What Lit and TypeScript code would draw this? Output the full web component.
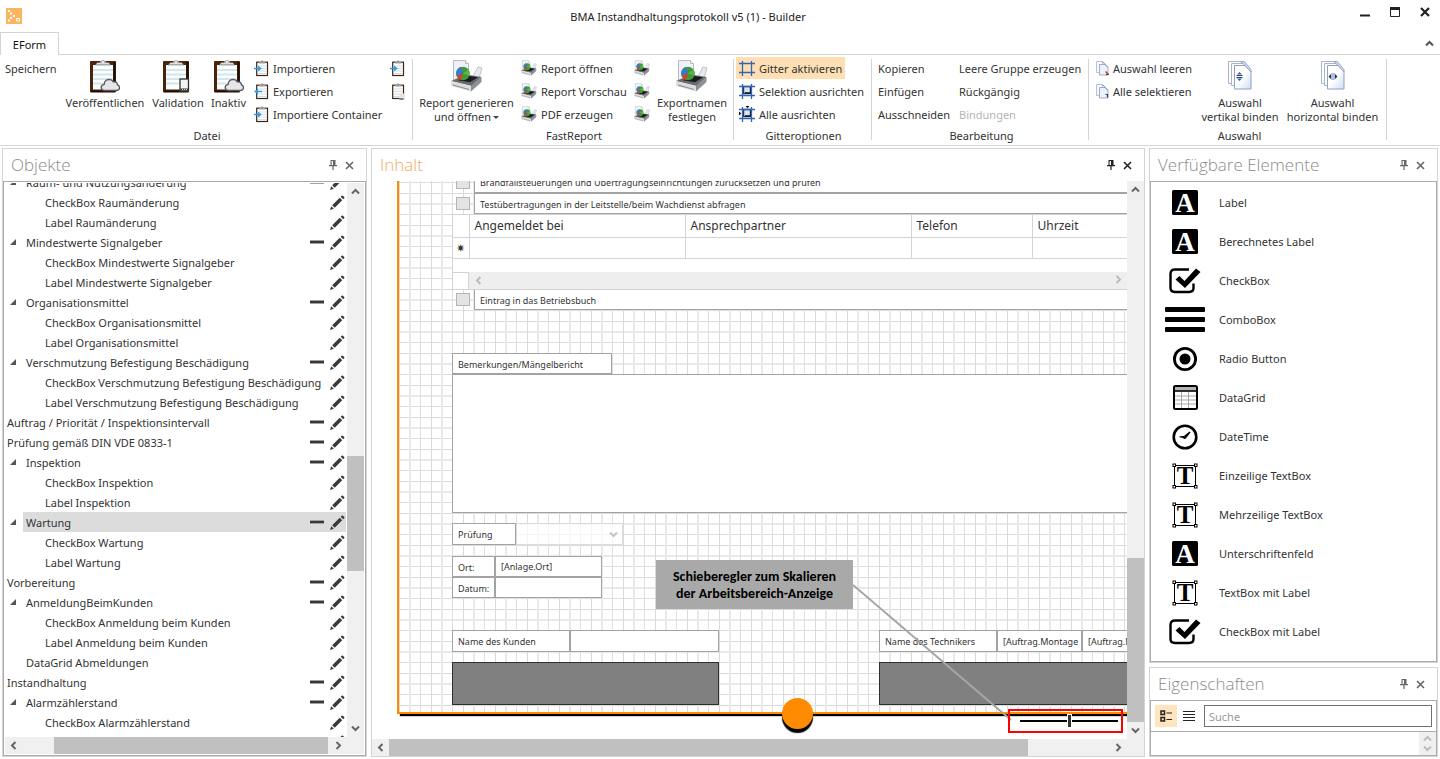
import { LitElement, html, svg, css, nothing } from "lit";
import { customElement, property } from "lit/decorators.js";
import { classMap } from "lit/directives/class-map.js";
import { styleMap } from "lit/directives/style-map.js";

/* ---------- glyphs ---------- */

const pinGlyph = html`<svg width="8" height="10" viewBox="0 0 8 10" aria-hidden="true">
  <path d="M1.500 0h5v5h1.500v1.200h-3.400v3.800h-1.200v-3.800h-3.400v-1.200h1.500z" fill="currentColor"/>
  <path d="M2.600 1h1.400v4h-1.400z" fill="#fff"/></svg>`;
const closeGlyph = html`<svg width="9" height="9" viewBox="0 0 9 9" aria-hidden="true">
  <path d="M1 1l7 7M8 1l-7 7" stroke="currentColor" stroke-width="1.600" fill="none"/></svg>`;
const chevrons: Record<string, string> = {
  up: "M1 6.500l3.500-3.500 3.500 3.500",
  down: "M1 2.500l3.500 3.500 3.500-3.500",
  left: "M6.500 1l-3.500 3.500 3.500 3.500",
  right: "M2.500 1l3.500 3.500-3.500 3.500",
};
const chevron = (dir: string) => html`<svg width="9" height="9" viewBox="0 0 9 9" aria-hidden="true">
  <path d=${chevrons[dir]} stroke="currentColor" stroke-width="2" fill="none"/></svg>`;
const pencilGlyph = html`<svg width="15" height="15" viewBox="0 0 15 15" aria-hidden="true">
  <path d="M0 15l1.300-3.800 2.500 2.500zM2.200 10.300l7.500-7.500 2.500 2.500-7.500 7.500zM10.700 1.800l1-1q.6-.6 1.200 0l1.300 1.300q.6.600 0 1.200l-1 1z" fill="#353a3b"/></svg>`;
const minusGlyph = html`<svg width="14" height="4" viewBox="0 0 14 4" aria-hidden="true">
  <path d="M0 0h14v4h-14z" fill="#b9bcbc"/><path d="M0 .8h14v2.400h-14z" fill="#353a3b"/></svg>`;
const expandGlyph = html`<svg width="6" height="6" viewBox="0 0 6 6" aria-hidden="true"><path d="M6 0v6h-6z" fill="#555"/></svg>`;

const cloudPath = "M14.500 30.500q-3.300-.2-3.300-3 0-2.800 3-3.200.3-4.600 4.600-5 3.200 0 4.500 2.600 3.800-.6 4.200 3 2 .6 2 2.800 0 2.600-2.800 2.800z";
const clipboardBig = (badge: "cloud" | "phone") => html`<svg width="30" height="33" viewBox="0 0 30 33" aria-hidden="true">
  <rect x="0" y="1" width="26" height="31" rx="1" fill="#4a2509"/>
  <path d="M24.500 2v29.500h-24" stroke="#1e0d03" stroke-width="2" fill="none"/>
  <rect x="3" y="5" width="20" height="24.500" fill="#fdfefe"/>
  <path d="M3 10h20M3 14.500h20M3 19h20M3 23.500h20" stroke="#d3e6ee" stroke-width="2"/>
  <path d="M5 5.500l2-3h2.500q1-2.500 3.500-2.500t3.500 2.500h2.500l2 3z" fill="#a7a9ab"/>
  <path d="M7 3.500h12" stroke="#dcdedf" stroke-width="1"/><circle cx="13" cy="2" r="1" fill="#fff"/>
  ${badge === "cloud"
    ? svg`<path d=${cloudPath} fill="#e6e6ea" stroke="#58585c" stroke-width="1.300"/>`
    : svg`<rect x="17" y="19" width="8.500" height="12" fill="#f4f4f4" stroke="#333" stroke-width="1.300"/><path d="M17.500 28.500h7.500v2h-7.500z" fill="#333"/><path d="M19 29.500h1M21 29.500h1M23 29.500h1" stroke="#ddd"/>`}
</svg>`;
const clipboardSmall = (kind: "in" | "out" | "phone") => html`<svg width="15" height="17" viewBox="0 0 15 17" aria-hidden="true">
  <rect x="2.700" y="2.200" width="10.800" height="13.300" fill="#fff" stroke="#3d2410" stroke-width="1.200"/>
  <path d="M4 6h8.500M4 8.500h8.500M4 11h8.500M4 13.500h8.500" stroke="#cfe0ea" stroke-width="1"/>
  <path d="M5 3.500v-1.500h1.800l.6-1.500h1.500l.6 1.500h1.800v1.500z" fill="#9b9b9b"/>
  ${kind === "in" ? svg`<path d="M0 7.700h4v-2.200l3.700 3-3.700 3v-2.200h-4z" fill="#2f9be6"/>` : nothing}
  ${kind === "out" ? svg`<path d="M8 7.700h-4v-2.200l-4 3 4 3v-2.200h4z" fill="#2f9be6"/>` : nothing}
  ${kind === "phone" ? svg`<path d="M9.500 10.500h5v6.500h-5z" fill="#e4e4e4"/><path d="M9.500 16h4" stroke="#222"/>` : nothing}
</svg>`;
const reportGlyph = (size: number) => html`<svg width=${size} height=${size} viewBox="0 0 32 32" aria-hidden="true">
  <path d="M2.500 .5h12l3 3v18h-15z" fill="#eef2f7" stroke="#b5bcc6"/>
  <path d="M14.500 .5v3h3" fill="#fff" stroke="#b5bcc6"/>
  <path d="M27 7l4 1-3.500 12-7-1z" fill="#e7e9ee" stroke="#a9adb4" stroke-width=".7"/>
  <path d="M0 21l15-6.500 15.500 2.500-10 9z" fill="#6b6c70"/>
  <path d="M14 15.500l13 1.800-8 5-12-2z" fill="#1b1b1e"/>
  <path d="M0 21l20 5v5.500l-20-5.500z" fill="#dcdddf"/>
  <path d="M20 26l10.500-9v5l-10.500 9.500z" fill="#8c8f94"/>
  <path d="M2 25l16 4.500" stroke="#8a8c90" stroke-width="1"/>
  <circle cx="12" cy="13.500" r="6.800" fill="#3f9a37"/>
  <path d="M12 13.500l-6.500 2.500a6.800 6.800 0 0 1 4.500-9.200z" fill="#3c78c8"/>
  <path d="M12 13.500l-6.500 2.500a6.800 6.800 0 0 0 4.500 4z" fill="#d8402b"/>
  <path d="M12 13.500l5.600-3.900a6.800 6.800 0 0 1 .8 6.200z" fill="#58b948"/>
</svg>`;
const gridGlyph = (kind: number) => html`<svg width="16" height="16" viewBox="0 0 16 16" aria-hidden="true">
  ${kind > 0 ? svg`<rect x="4.500" y="3.500" width="7" height="7" fill="#dfe3ee" stroke="#2a2f45" stroke-width="1.400"/><path d="M6 10h6v-6" stroke="#12162a" stroke-width="1.500" fill="none"/>` : nothing}
  ${kind > 1 ? svg`<path d="M6.500 0h4l-2 2.300zM0 5.500v4l2.300-2z" fill="#111"/>` : nothing}
  <path d="M0 3.500h16M0 12.500h16M3.500 1v15M12.500 1v15" stroke="#2f66b5" stroke-width="1.300" fill="none"/>
</svg>`;
const pagesGlyph = (kind: "v" | "h") => html`<svg width="24" height="30" viewBox="0 0 24 30" aria-hidden="true">
  <defs><linearGradient id="pg" x1="0" y1="0" x2="1" y2="1"><stop offset="0" stop-color="#fff"/><stop offset=".5" stop-color="#fff"/><stop offset="1" stop-color="#cddcf5"/></linearGradient></defs>
  <path d="M.5 1.500h12l4 4v18h-16z" fill="url(#pg)" stroke="#a9b5cf"/>
  <path d="M3.500 3.500h12l4 4v18h-16z" fill="url(#pg)" stroke="#a9b5cf"/>
  <path d="M6.500 5.500h10.500l6 6v17.500h-16.500z" fill="url(#pg)" stroke="#8ea0c6"/>
  <path d="M12.500 1.500h4l6.500 8v2.500l-6-6.500z" fill="#cfd8e8" stroke="#8593b3" stroke-width=".7"/>
  ${kind === "v"
    ? svg`<path d="M8.500 15.500h6M8.500 17.500h6" stroke="#28426e"/><path d="M11.500 12l2.500 2.500h-5zM11.500 21l2.500-2.500h-5z" fill="#3f63a0"/>`
    : svg`<path d="M11 13v7M13 13v7" stroke="#5f7fb5"/><path d="M7.500 16.500l2.500-2.500v5zM16.500 16.500l-2.500-2.500v5z" fill="#1e2c46"/>`}
</svg>`;
const pagesSmall = (clear: boolean) => html`<svg width="13" height="15" viewBox="0 0 13 15" aria-hidden="true">
  <path d="M.5 .5h6v11h-6z" fill="#f6f9fe" stroke="#b7c2da"/>
  <path d="M3.500 3.500h5.500l3 3v7.500h-8.500z" fill="#edf2fb" stroke="#9fadc9"/>
  <path d="M6.500 .5l5.500 6" stroke="#8292b5"/>
  ${clear ? svg`<path d="M9.500 10.500l3 3" stroke="#c33c22" stroke-width="1.400"/><path d="M10 13.500h2.500" stroke="#333"/>` : svg`<path d="M9.500 10.500h2v3" stroke="#2d4068" stroke-width="1.200" fill="none"/>`}
</svg>`;

const toolGlyphs: Record<string, unknown> = {
  label: html`<svg width="26" height="25" viewBox="0 0 26 25" aria-hidden="true"><rect width="26" height="25" rx="1.500"/>
    <text x="13" y="22" text-anchor="middle" class="glyph-a">A</text></svg>`,
  check: html`<svg width="32" height="26" viewBox="0 0 32 26" aria-hidden="true">
    <path d="M20 1.500h-14q-4.500 0-4.500 4.500v14q0 4 4.500 4h14q4.500 0 4.500-4v-4.500" fill="none" stroke="#000" stroke-width="2.400"/>
    <path d="M6.500 11.500l4-3.500 5 5 11.500-12.500 4.500 3.500-15.500 16z"/></svg>`,
  combo: html`<svg width="40" height="25" viewBox="0 0 40 25" aria-hidden="true"><rect width="40" height="5" rx="1"/><rect y="10" width="40" height="5" rx="1"/><rect y="20" width="40" height="5" rx="1"/></svg>`,
  radio: html`<svg width="26" height="26" viewBox="0 0 26 26" aria-hidden="true"><circle cx="13" cy="13" r="10.600" fill="none" stroke="#000" stroke-width="2.800"/><circle cx="13" cy="13" r="5.500"/></svg>`,
  grid: html`<svg width="25" height="25" viewBox="0 0 25 25" aria-hidden="true"><rect x="1" y="1" width="23" height="23" rx="1.500" fill="#fff" stroke="#000" stroke-width="2"/>
    <path d="M2 2h21v3.500h-21z" fill="#b4b4b4"/><path d="M1 6h23" stroke="#000" stroke-width="1.600"/>
    <path d="M2 11h21M2 15h21M2 19h21M8.500 7v16M15.500 7v16" stroke="#a6a6a6" stroke-width="1"/></svg>`,
  clock: html`<svg width="26" height="26" viewBox="0 0 26 26" aria-hidden="true"><circle cx="13" cy="13" r="11.300" fill="none" stroke="#000" stroke-width="2.600"/>
    <path d="M7.500 12.300l4.500-.3 5.500-4.500 1 1-4.500 5.700q-1.500 1.500-3-.2l-3.500-.7z"/></svg>`,
  text: html`<svg width="26" height="26" viewBox="0 0 26 26" aria-hidden="true"><path d="M2.500 2.500h21v21h-21z" fill="none" stroke="#000"/>
    <text x="13" y="21" text-anchor="middle" class="glyph-t">T</text>
    <g fill="#fff" stroke="#000"><rect x="1" y="1" width="2.500" height="2.500"/><rect x="22.500" y="1" width="2.500" height="2.500"/><rect x="1" y="22.500" width="2.500" height="2.500"/><rect x="22.500" y="22.500" width="2.500" height="2.500"/></g></svg>`,
};

/* ---------- shared pieces ---------- */

const base = css`
  * { box-sizing: border-box; }
  button, input, select, textarea { font: inherit; color: inherit; margin: 0; padding: 0; border: 0; background: none; border-radius: 0; outline: none; }
  button { display: inline-flex; align-items: center; justify-content: center; }
  svg { display: block; flex: none; }
`;

@customElement("scroll-bar")
class ScrollBar extends LitElement {
  @property({ type: Boolean, reflect: true }) vertical = false;
  @property({ type: Number }) before = 0;
  @property({ type: Number }) size = 0;
  @property({ type: Number }) after = 0;
  static styles = [base, css`
    :host { display: flex; height: 17px; background: #f0f0f0; color: #666; }
    :host([vertical]) { flex-direction: column; width: 17px; height: auto; }
    .step { flex: none; width: 17px; height: 17px; }
    .thumb { background: #c0c0c0; }
  `];
  render() {
    const grow = (n: number) => styleMap({ flex: `${n} 1 0px` });
    return html`
      <button class="step" aria-label="Zurück">${chevron(this.vertical ? "up" : "left")}</button>
      <span style=${grow(this.before)}></span><span class="thumb" style=${grow(this.size)}></span><span style=${grow(this.after)}></span>
      <button class="step" aria-label="Weiter">${chevron(this.vertical ? "down" : "right")}</button>`;
  }
}

@customElement("dock-panel")
class DockPanel extends LitElement {
  @property() heading = "";
  @property({ type: Boolean, reflect: true }) active = false;
  @property({ type: Boolean, reflect: true }) framed = false;
  static styles = [base, css`
    :host { display: flex; flex-direction: column; min-width: 0; min-height: 0; border: 1px solid #d4d4d4; background: #fff; }
    .head { display: flex; align-items: center; flex: none; height: 32px; padding: 0 8px; color: #666; }
    h2 { flex: 1; margin: 0; font-family: "Open Sans", "Noto Sans", sans-serif; font-size: 17px; line-height: 24px; font-weight: 300; color: #8c8c8c; }
    .head button { width: 17px; height: 16px; }
    .body { flex: 1; display: flex; flex-direction: column; min-height: 0; min-width: 0; }
    :host([framed]) .body { border: 1px solid #ababab; }
    :host([active]) h2 { color: #f2ab62; }
    :host([active]) .head { color: #222; }
  `];
  render() {
    return html`<header class="head"><h2>${this.heading}</h2>
      <button aria-label="Anheften">${pinGlyph}</button><button aria-label="Schließen">${closeGlyph}</button></header>
      <div class="body"><slot></slot></div>`;
  }
}

/* ---------- ribbon ---------- */

@customElement("app-ribbon")
class AppRibbon extends LitElement {
  static styles = [base, css`
    :host { display: flex; height: 91px; padding: 2px 0 3px; border-bottom: 1px solid #d4d4d4; }
    .group { display: flex; flex-direction: column; flex: none; border-right: 1px solid #d4d4d4; margin: 2px 0; }
    .items { flex: 1; display: flex; align-items: flex-start; margin-top: -2px; }
    .caption { height: 14px; line-height: 14px; margin-bottom: -3px; text-align: center; }
    .datei { width: 413px; padding-left: 2px; }
    .report { width: 321px; padding-left: 2px; }
    .gitter { width: 138px; padding-left: 2px; }
    .bearb { width: 217px; padding-left: 3px; }
    .auswahl { width: 298px; padding-left: 4px; }
    .col { display: flex; flex-direction: column; align-items: flex-start; gap: 1px; flex: none; }
    .row { height: 22px; padding: 0 3px; gap: 4px; white-space: nowrap; }
    .row.on { background: #fddfb3; }
    .row:disabled { color: #b5b5b5; }
    .big { flex-direction: column; justify-content: flex-start; padding-top: 3px; flex: none; line-height: 14px; white-space: nowrap; }
    .big .pic { height: 36px; display: flex; align-items: flex-start; }
    .drop { display: inline-block; margin-left: 2px; vertical-align: 2px; border: 3px solid transparent; border-top-color: #444; border-bottom: 0; }
    .c58 { width: 58px; } .c84 { width: 90px; } .c56 { width: 56px; } .c46 { width: 45px; } .c139 { width: 136px; }
    .c104 { width: 103px; } .c113 { width: 113px; } .c24 { width: 22px; } .c78 { width: 78px; } .c81 { width: 81px; }
    .c100 { width: 100px; } .c94 { width: 94px; } .c90 { width: 91px; }
  `];
  row(text: string, icon: unknown = nothing, on = false, off = false) {
    return html`<button class=${classMap({ row: true, on })} ?disabled=${off} aria-label=${text || "Bericht"}>${icon}${text}</button>`;
  }
  big(cls: string, icon: unknown, a: string, b: string = "", drop = false) {
    return html`<button class="big ${cls}"><span class="pic">${icon}</span><span>${a}</span>${b ? html`<span>${b}${drop ? html`<i class="drop"></i>` : nothing}</span>` : nothing}</button>`;
  }
  render() {
    return html`
      <section class="group datei"><div class="items">
        <div class="col c58">${this.row("Speichern")}</div>
        ${this.big("c84", clipboardBig("cloud"), "Veröffentlichen")}
        ${this.big("c56", clipboardBig("phone"), "Validation")}
        ${this.big("c46", clipboardBig("cloud"), "Inaktiv")}
        <div class="col c139">${this.row("Importieren", clipboardSmall("in"))}${this.row("Exportieren", clipboardSmall("out"))}${this.row("Importiere Container", clipboardSmall("in"))}</div>
        <div class="col">${this.row("", clipboardSmall("in"))}${this.row("", clipboardSmall("phone"))}</div>
      </div><div class="caption">Datei</div></section>
      <section class="group report"><div class="items">
        ${this.big("c104", reportGlyph(32), "Report generieren", "und öffnen", true)}
        <div class="col c113">${this.row("Report öffnen", reportGlyph(16))}${this.row("Report Vorschau", reportGlyph(16))}${this.row("PDF erzeugen", reportGlyph(16))}</div>
        <div class="col c24">${this.row("", reportGlyph(16))}${this.row("", reportGlyph(16))}${this.row("", reportGlyph(16))}</div>
        ${this.big("c78", reportGlyph(32), "Exportnamen", "festlegen")}
      </div><div class="caption">FastReport</div></section>
      <section class="group gitter"><div class="items">
        <div class="col">${this.row("Gitter aktivieren", gridGlyph(0), true)}${this.row("Selektion ausrichten", gridGlyph(1))}${this.row("Alle ausrichten", gridGlyph(2))}</div>
      </div><div class="caption">Gitteroptionen</div></section>
      <section class="group bearb"><div class="items">
        <div class="col c81">${this.row("Kopieren")}${this.row("Einfügen")}${this.row("Ausschneiden")}</div>
        <div class="col">${this.row("Leere Gruppe erzeugen")}${this.row("Rückgängig")}${this.row("Bindungen", nothing, false, true)}</div>
      </div><div class="caption">Bearbeitung</div></section>
      <section class="group auswahl"><div class="items">
        <div class="col c100">${this.row("Auswahl leeren", pagesSmall(true))}${this.row("Alle selektieren", pagesSmall(false))}</div>
        ${this.big("c94", pagesGlyph("v"), "Auswahl", "vertikal binden")}
        ${this.big("c90", pagesGlyph("h"), "Auswahl", "horizontal binden")}
      </div><div class="caption">Auswahl</div></section>`;
  }
}

/* ---------- object tree ---------- */

type Node = [depth: number, name: string, removable?: boolean, open?: boolean];
const nodes: Node[] = [
  [1, "Raum- und Nutzungsänderung", true, true], [2, "CheckBox Raumänderung"], [2, "Label Raumänderung"],
  [1, "Mindestwerte Signalgeber", true, true], [2, "CheckBox Mindestwerte Signalgeber"], [2, "Label Mindestwerte Signalgeber"],
  [1, "Organisationsmittel", true, true], [2, "CheckBox Organisationsmittel"], [2, "Label Organisationsmittel"],
  [1, "Verschmutzung Befestigung Beschädigung", true, true], [2, "CheckBox Verschmutzung Befestigung Beschädigung"], [2, "Label Verschmutzung Befestigung Beschädigung"],
  [0, "Auftrag / Priorität / Inspektionsintervall", true], [0, "Prüfung gemäß DIN VDE 0833-1", true],
  [1, "Inspektion", true, true], [2, "CheckBox Inspektion"], [2, "Label Inspektion"],
  [1, "Wartung", true, true], [2, "CheckBox Wartung"], [2, "Label Wartung"],
  [0, "Vorbereitung", true],
  [1, "AnmeldungBeimKunden", true, true], [2, "CheckBox Anmeldung beim Kunden"], [2, "Label Anmeldung beim Kunden"],
  [1, "DataGrid Abmeldungen"],
  [0, "Instandhaltung", true],
  [1, "Alarmzählerstand", true, true], [2, "CheckBox Alarmzählerstand"], [2, ""],
];

@customElement("object-tree")
class ObjectTree extends LitElement {
  static styles = [base, css`
    :host { flex: 1; display: grid; grid-template: minmax(0, 1fr) 17px / minmax(0, 1fr) 17px; min-height: 0; padding: 1px; }
    .view { overflow: hidden; }
    .list { list-style: none; margin: -11px 0 0; padding: 0; }
    .node { display: flex; height: 20px; padding-right: 1px; }
    .indent { flex: none; display: flex; align-items: center; justify-content: flex-end; padding-right: 7px; }
    .d0 { width: 0; padding: 0; } .d1 { width: 18px; } .d2 { width: 37px; }
    .content { flex: 1; min-width: 0; display: flex; align-items: center; padding-left: 3px; padding-right: 1px; }
    .d0 + .content { padding-left: 2px; }
    .name { flex: 1; min-width: 0; white-space: nowrap; line-height: 20px; padding-top: 1px; }
    .act { flex: none; width: 15px; height: 18px; }
    .act + .act { margin-left: 6px; }
    .sel .content { background: #dcdcdc; }
    .corner { background: #f0f0f0; }
  `];
  render() {
    return html`<div class="view"><ul class="list" role="tree">
      ${nodes.map(([depth, name, removable, open]) => html`<li class=${classMap({ node: true, sel: name === "Wartung" })} role="treeitem">
        <span class="indent d${depth}">${open ? expandGlyph : nothing}</span>
        <span class="content"><span class="name">${name}</span>
          ${removable ? html`<button class="act" aria-label="Entfernen">${minusGlyph}</button>` : nothing}
          <button class="act" aria-label="Bearbeiten">${pencilGlyph}</button></span></li>`)}
      </ul></div>
      <scroll-bar vertical .before=${256} .size=${115} .after=${149}></scroll-bar>
      <scroll-bar .before=${32} .size=${274} .after=${2}></scroll-bar><span class="corner"></span>`;
  }
}

/* ---------- form designer ---------- */

type Kind = "check" | "label" | "field" | "area" | "combo" | "sign";
interface Item { kind: Kind; x: number; y: number; w: number; h: number; text?: string; id?: string; }
const WIDE = 900;
const items: Item[] = [
  { kind: "check", x: 57, y: -5, w: 14, h: 13, id: "c1" }, { kind: "label", x: 75, y: -10, w: WIDE, h: 22, id: "c1", text: "Brandfallsteuerungen und Übertragungseinrichtungen zurücksetzen und prüfen" },
  { kind: "check", x: 57, y: 16, w: 14, h: 13, id: "c2" }, { kind: "label", x: 75, y: 12, w: WIDE, h: 21, id: "c2", text: "Testübertragungen in der Leitstelle/beim Wachdienst abfragen" },
  { kind: "check", x: 57, y: 112, w: 14, h: 13, id: "c3" }, { kind: "label", x: 75, y: 108, w: WIDE, h: 21, id: "c3", text: "Eintrag in das Betriebsbuch" },
  { kind: "label", x: 53, y: 172, w: 160, h: 21, id: "a1", text: "Bemerkungen/Mängelbericht" }, { kind: "area", x: 53, y: 193, w: WIDE, h: 139, id: "a1" },
  { kind: "label", x: 53, y: 342, w: 64, h: 22, id: "s1", text: "Prüfung" }, { kind: "combo", x: 117, y: 342, w: 107, h: 22, id: "s1" },
  { kind: "label", x: 53, y: 375, w: 43, h: 21, id: "f1", text: "Ort:" }, { kind: "field", x: 96, y: 375, w: 107, h: 21, id: "f1", text: "[Anlage.Ort]" },
  { kind: "label", x: 53, y: 396, w: 43, h: 21, id: "f2", text: "Datum:" }, { kind: "field", x: 96, y: 396, w: 107, h: 21, id: "f2" },
  { kind: "label", x: 53, y: 449, w: 118, h: 22, id: "f3", text: "Name des Kunden" }, { kind: "field", x: 171, y: 449, w: 149, h: 22, id: "f3" },
  { kind: "sign", x: 53, y: 481, w: 267, h: 43 },
  { kind: "label", x: 480, y: 449, w: 118, h: 22, id: "f4", text: "Name des Technikers" }, { kind: "field", x: 598, y: 449, w: 85, h: 22, id: "f4", text: "[Auftrag.Montage]" },
  { kind: "field", x: 683, y: 449, w: 85, h: 22, id: "f5", text: "[Auftrag.Montage]" },
  { kind: "sign", x: 480, y: 481, w: 267, h: 43 },
];

@customElement("form-designer")
class FormDesigner extends LitElement {
  static styles = [base, css`
    :host { flex: 1; display: grid; grid-template: minmax(0, 1fr) 17px / minmax(0, 1fr) 17px; min-height: 0; }
    .view { position: relative; overflow: hidden; }
    .sheet {
      position: relative; width: 1400px; height: 533px; margin-left: 25px;
      border: solid #ff8c00; border-width: 0 0 2px 2px; box-shadow: 3px 2px 1px #000;
      background-color: #fff;
      background-image:
        linear-gradient(90deg, #dadada 1px, transparent 1px 10px, #e9e9e9 10px 12px, transparent 12px 21px, #dedede 21px 22px, transparent 22px),
        linear-gradient(#dadada 1px, transparent 1px 10px, #e9e9e9 10px 12px, transparent 12px 21px, #dedede 21px 22px, transparent 22px);
      background-size: 32px 32px; background-position: 0 12px; font-size: 9px;
    }
    .item { position: absolute; }
    .check { appearance: none; background: #e3e3e3; border: 1px solid #b4b4b4; }
    .label, .field, .area { background: #fff; border: 1px solid #a3a3a3; white-space: nowrap; overflow: hidden; }
    .label { padding-left: 5px; line-height: 21px; }
    .field { padding: 0 3px 0 5px; }
    .area { resize: none; }
    .combo { appearance: none; border: 1px solid #dcdcdc; background: rgba(255, 255, 255, 0.7); }
    .combo-mark { position: absolute; left: 210px; top: 349px; color: #c4c4c4; }
    .sign { background: #808080; border: 1px solid #2e2e2e; }
    .records { position: absolute; left: 53px; top: 33px; width: 900px; background: #fff; border: 1px solid #d4d4d4; font-size: 12px; }
    table { width: 100%; table-layout: fixed; border-collapse: collapse; }
    th, td { text-align: left; font-weight: 400; padding: 0 5px; border: solid #d4d4d4; border-width: 0 1px 1px 0; white-space: nowrap; }
    th { height: 22px; } td { height: 21px; }
    td:first-child { padding: 0; text-align: center; font-size: 11px; }
    .w0 { width: 16px; } .w1 { width: 216px; } .w2 { width: 226px; } .w3 { width: 121px; }
    .hscroll { display: flex; align-items: center; height: 17px; margin-top: 13px; background: #eee; color: #bbb; }
    .hscroll i { width: 16px; height: 17px; margin-right: 5px; background: #fff; border-right: 1px solid #d4d4d4; border-top: 1px solid #d4d4d4; }
    .hend { position: absolute; right: 4px; top: 94px; color: #bbb; }
    .grip { position: absolute; left: 383px; bottom: -17px; width: 31px; height: 31px; border-radius: 50%; background: #ff8c00; box-shadow: 0 4px 1px #000; }
    .note { position: absolute; right: 274px; bottom: 130px; width: 197px; height: 49px; padding-top: 8px; background: #a9a9a9; color: #000;
      font: 700 14px/17px Carlito, Lato, sans-serif; text-align: center; }
    .wire { position: absolute; right: 115px; bottom: 18px; }
    .zoom { position: absolute; right: 4px; bottom: 6px; width: 115px; height: 24px; padding: 0 3px 0 10px; border: 2px solid #f00; display: flex; align-items: center; }
    .zoom input { appearance: none; flex: 1; min-width: 0; height: 14px; background: linear-gradient(#000, #000) center / 100% 2px no-repeat; }
    .zoom input::-webkit-slider-thumb { appearance: none; width: 5px; height: 14px; background: #333; border: solid #fff; border-width: 1px; }
    .corner { background: #f0f0f0; }
  `];
  item(i: Item) {
    const pos = styleMap({ left: `${i.x}px`, top: `${i.y}px`, width: `${i.w}px`, height: `${i.h}px` });
    switch (i.kind) {
      case "check": return html`<input type="checkbox" class="item check" id=${i.id} style=${pos}>`;
      case "label": return html`<label class="item label" for=${i.id} style=${pos}>${i.text}</label>`;
      case "field": return html`<input type="text" class="item field" id=${i.id} aria-label="Feld" .value=${i.text ?? ""} style=${pos}>`;
      case "area": return html`<textarea class="item area" id=${i.id} style=${pos}></textarea>`;
      case "combo": return html`<select class="item combo" id=${i.id} style=${pos}></select>`;
      default: return html`<div class="item sign" style=${pos}></div>`;
    }
  }
  render() {
    return html`<div class="view">
      <div class="sheet">
        ${items.map((i) => this.item(i))}
        <span class="combo-mark">${chevron("down")}</span>
        <div class="records">
          <table>
            <colgroup><col class="w0"><col class="w1"><col class="w2"><col class="w3"><col></colgroup>
            <thead><tr><th></th><th>Angemeldet bei</th><th>Ansprechpartner</th><th>Telefon</th><th>Uhrzeit</th></tr></thead>
            <tbody><tr><td>✷</td><td></td><td></td><td></td><td></td></tr></tbody>
          </table>
          <div class="hscroll"><i></i>${chevron("left")}</div>
        </div>
        <div class="grip"></div>
      </div>
      <span class="hend">${chevron("right")}</span>
      <div class="note">Schieberegler zum Skalieren<br>der Arbeitsbereich-Anzeige</div>
      <svg class="wire" width="159" height="137" viewBox="0 0 159 137" aria-hidden="true"><path d="M0 1l158 135" stroke="#a6a6a6" stroke-width="2"/></svg>
      <div class="zoom"><input type="range" min="0" max="100" value="50" aria-label="Skalierung"></div>
    </div>
    <scroll-bar vertical .before=${360} .size=${164} .after=${0}></scroll-bar>
    <scroll-bar .before=${0} .size=${639} .after=${82}></scroll-bar><span class="corner"></span>`;
  }
}

/* ---------- toolbox & properties ---------- */

const tools: [string, string][] = [
  ["label", "Label"], ["label", "Berechnetes Label"], ["check", "CheckBox"], ["combo", "ComboBox"], ["radio", "Radio Button"], ["grid", "DataGrid"],
  ["clock", "DateTime"], ["text", "Einzeilige TextBox"], ["text", "Mehrzeilige TextBox"], ["label", "Unterschriftenfeld"], ["text", "TextBox mit Label"], ["check", "CheckBox mit Label"],
];

@customElement("tool-box")
class ToolBox extends LitElement {
  static styles = [base, css`
    :host { flex: 1; min-height: 0; overflow: hidden; padding: 1px 0 0; }
    ul { list-style: none; margin: 0; padding: 0; }
    .tool { width: 100%; height: 39px; justify-content: flex-start; }
    .pic { width: 68px; display: flex; justify-content: center; }
    .glyph-a { font: 700 27px "Liberation Serif", serif; fill: #fff; }
    .glyph-t { font: 700 25px "Liberation Serif", serif; }
  `];
  render() {
    return html`<ul>${tools.map(([g, t]) => html`<li><button class="tool"><span class="pic">${toolGlyphs[g]}</span>${t}</button></li>`)}</ul>`;
  }
}

@customElement("property-grid")
class PropertyGrid extends LitElement {
  static styles = [base, css`
    :host { flex: 1; display: flex; flex-direction: column; }
    .tools { display: flex; align-items: center; height: 31px; padding: 0 4px; border-bottom: 1px solid #ababab; }
    .tools button { width: 22px; height: 22px; margin-right: 1px; }
    .tools .on { background: #ffe4c0; }
    .search { flex: 1; min-width: 0; height: 22px; margin-left: 3px; padding: 0 4px; border: 1px solid #707070; }
    .search::placeholder { color: #999; opacity: 1; }
    .rest { flex: 1; display: flex; justify-content: flex-end; }
    .spin { width: 17px; display: flex; flex-direction: column; align-items: center; justify-content: space-evenly; background: #f0f0f0; color: #bdbdbd; }
  `];
  render() {
    return html`<div class="tools">
        <button class="on" aria-label="Kategorien"><svg width="12" height="12" viewBox="0 0 12 12" aria-hidden="true"><path d="M1 1h3.500v3.500h-3.500zM1 7.500h3.500v3.500h-3.500z" fill="none" stroke="#222" stroke-width="1.500"/><path d="M6.500 3h5.500M6.500 9.500h5.500" stroke="#222"/></svg></button>
        <button aria-label="Alphabetisch"><svg width="12" height="11" viewBox="0 0 12 11" aria-hidden="true"><path d="M0 .5h12M0 3.500h12M0 6.500h12M0 9.500h12" stroke="#222"/></svg></button>
        <input class="search" type="text" placeholder="Suche" aria-label="Suche">
      </div>
      <div class="rest"><div class="spin">${chevron("up")}${chevron("down")}</div></div>`;
  }
}

/* ---------- shell ---------- */

@customElement("app-root")
class AppRoot extends LitElement {
  static styles = [base, css`
    :host { display: flex; flex-direction: column; height: 100vh; overflow: hidden; background: #fff; color: #333; font-family: "Noto Sans", "Open Sans", sans-serif; font-size: 11px; }
    .title { display: flex; align-items: center; flex: none; height: 32px; padding: 0 6px; color: #222; }
    .title h1 { flex: 1; margin: 0; padding-left: 4px; font-size: 11px; font-weight: 400; text-align: center; }
    .title button { width: 30px; height: 20px; margin-bottom: 8px; }
    .win { display: flex; margin-right: -6px; }
    .tabs { display: flex; align-items: stretch; flex: none; height: 23px; border-bottom: 1px solid #d4d4d4; }
    .tab { width: 59px; height: 23px; border: solid #d4d4d4; border-width: 1px 1px 0 1px; background: #fff; color: #111; }
    .fold { margin-left: auto; width: 22px; color: #555; }
    .work { flex: 1; display: grid; grid-template-columns: 365px minmax(0, 1fr) 289px; gap: 4px; padding: 2px; min-height: 0; }
    .side { display: flex; flex-direction: column; gap: 4px; min-height: 0; }
    .props { flex: none; height: 90px; }
    .palette { flex: 1; }
  `];
  render() {
    return html`
      <header class="title">
        <svg width="16" height="16" viewBox="0 0 16 16" aria-hidden="true"><rect width="16" height="16" fill="#fbb55e"/>
          <path d="M2 2h2v2h-2zM4 4.500h2v2h-2zM7 7h2v2h-2zM4 9h2v2h-2zM2 11.500h2v2h-2z" fill="#fff"/><path d="M10.500 10.500h3v2.500h-3z" fill="none" stroke="#fff"/></svg>
        <h1>BMA Instandhaltungsprotokoll v5 (1) - Builder</h1>
        <div class="win">
          <button aria-label="Minimieren"><svg width="10" height="11" viewBox="0 0 10 11"><path d="M0 7.500h10v2h-10z" fill="#222"/></svg></button>
          <button aria-label="Maximieren"><svg width="10" height="10" viewBox="0 0 10 10"><path d="M.5 .5h9v9h-9z" fill="none" stroke="#222"/><path d="M0 0h10v3h-10z" fill="#222"/></svg></button>
          <button aria-label="Schließen"><svg width="10" height="10" viewBox="0 0 10 10"><path d="M1 1l8 8M9 1l-8 8" stroke="#222" stroke-width="2.200"/></svg></button>
        </div>
      </header>
      <nav class="tabs"><button class="tab">EForm</button><button class="fold" aria-label="Menüband">${chevron("up")}</button></nav>
      <app-ribbon></app-ribbon>
      <main class="work">
        <dock-panel heading="Objekte" framed><object-tree></object-tree></dock-panel>
        <dock-panel heading="Inhalt" active><form-designer></form-designer></dock-panel>
        <div class="side">
          <dock-panel class="palette" heading="Verfügbare Elemente" framed><tool-box></tool-box></dock-panel>
          <dock-panel class="props" heading="Eigenschaften" framed><property-grid></property-grid></dock-panel>
        </div>
      </main>`;
  }
}
